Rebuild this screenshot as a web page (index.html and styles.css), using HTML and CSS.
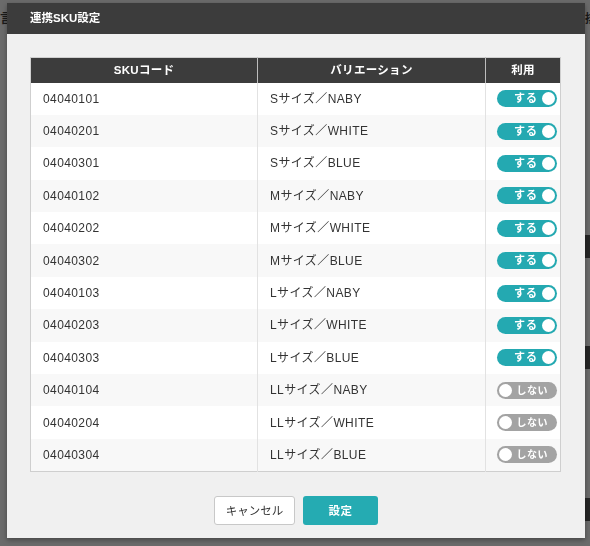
FILE: index.html
```html
<!DOCTYPE html>
<html lang="ja">
<head>
    <meta charset="UTF-8">
    <meta name="viewport" content="width=device-width, initial-scale=1.0">
    <title>連携SKU設定</title>
    <link rel="stylesheet" href="styles.css">
</head>
<body>
    <div class="page">
        <div class="page-mark mark-left">言</div>
        <div class="page-mark mark-right">排</div>
        <div class="page-bar bar-1"></div>
        <div class="page-bar bar-2"></div>
        <div class="page-bar bar-3"></div>
    </div>

    <div class="overlay">
        <div class="modal">
            <div class="modal-header">連携SKU設定</div>
            <div class="modal-body">
                <table class="sku-table">
                    <thead>
                        <tr>
                            <th class="col-code">SKUコード</th>
                            <th class="col-var">バリエーション</th>
                            <th class="col-use">利用</th>
                        </tr>
                    </thead>
                    <tbody id="skuList">
                        <!-- rows rendered below -->
                    </tbody>
                </table>
            </div>
            <div class="modal-footer">
                <button class="btn btn-cancel">キャンセル</button>
                <button class="btn btn-submit">設定</button>
            </div>
        </div>
    </div>

    <script>
        const skus = [
            { code: '04040101', name: 'Sサイズ／NABY', use: true },
            { code: '04040201', name: 'Sサイズ／WHITE', use: true },
            { code: '04040301', name: 'Sサイズ／BLUE', use: true },
            { code: '04040102', name: 'Mサイズ／NABY', use: true },
            { code: '04040202', name: 'Mサイズ／WHITE', use: true },
            { code: '04040302', name: 'Mサイズ／BLUE', use: true },
            { code: '04040103', name: 'Lサイズ／NABY', use: true },
            { code: '04040203', name: 'Lサイズ／WHITE', use: true },
            { code: '04040303', name: 'Lサイズ／BLUE', use: true },
            { code: '04040104', name: 'LLサイズ／NABY', use: false },
            { code: '04040204', name: 'LLサイズ／WHITE', use: false },
            { code: '04040304', name: 'LLサイズ／BLUE', use: false }
        ];

        function renderTable() {
            const list = document.getElementById('skuList');
            list.innerHTML = '';

            skus.forEach((sku, index) => {
                const row = document.createElement('tr');
                row.innerHTML = `
                    <td>${sku.code}</td>
                    <td>${sku.name}</td>
                    <td class="use-cell">
                        <span class="toggle ${sku.use ? 'on' : 'off'}" data-index="${index}">
                            <span class="toggle-label">${sku.use ? 'する' : 'しない'}</span>
                            <span class="toggle-knob"></span>
                        </span>
                    </td>
                `;
                list.appendChild(row);
            });
        }

        document.getElementById('skuList').addEventListener('click', (e) => {
            const toggle = e.target.closest('.toggle');
            if (!toggle) return;
            const i = Number(toggle.dataset.index);
            skus[i].use = !skus[i].use;
            renderTable();
        });

        renderTable();
    </script>
</body>
</html>
```

FILE: styles.css
```css
* {
    margin: 0;
    padding: 0;
    box-sizing: border-box;
}

body {
    font-family: "Liberation Sans", "Noto Sans CJK JP", sans-serif;
    font-size: 12px;
    color: #333;
    background-color: #6b6b6b;
    width: 590px;
    height: 546px;
    overflow: hidden;
}

/* page behind the overlay */
.page {
    position: relative;
    width: 100%;
    height: 100%;
}

.page-mark {
    position: absolute;
    top: 9px;
    font-size: 12px;
    font-weight: bold;
    color: #1a1a1a;
}

.mark-left {
    left: 0;
}

.mark-right {
    right: 0;
    width: 5px;
    overflow: hidden;
}

.page-bar {
    position: absolute;
    right: 0;
    width: 10px;
    height: 23px;
    background-color: #262626;
}

.bar-1 {
    top: 235px;
}

.bar-2 {
    top: 346px;
}

.bar-3 {
    top: 498px;
}

/* modal */
.overlay {
    position: fixed;
    top: 0;
    left: 0;
    width: 590px;
    height: 546px;
    padding: 3px 0 0 7px;
}

.modal {
    width: 578px;
    height: 535px;
    background-color: #f0f0f0;
    box-shadow: 0 2px 5px rgba(0, 0, 0, 0.35);
    display: flex;
    flex-direction: column;
}

.modal-header {
    height: 31px;
    background-color: #3c3c3c;
    color: #fff;
    font-weight: bold;
    font-size: 11.5px;
    line-height: 31px;
    padding-left: 23px;
}

.modal-body {
    padding: 23px 24px 0 23px;
}

.sku-table {
    width: 100%;
    border-collapse: collapse;
    border: 1px solid #cfcfcf;
    table-layout: fixed;
}

.sku-table th {
    height: 25px;
    line-height: 16px;
    background-color: #3c3c3c;
    color: #fff;
    font-weight: bold;
    font-size: 11.5px;
    letter-spacing: 0.3px;
    text-align: center;
    border-left: 1px solid #bdbdbd;
}

.sku-table th:first-child {
    border-left: none;
}

.col-code {
    width: 227px;
}

.col-var {
    width: 228px;
}

.sku-table td {
    height: 32.4px;
    line-height: 14px;
    padding-left: 12px;
    font-size: 12px;
    letter-spacing: 0.4px;
    color: #333;
    vertical-align: middle;
    border-left: 1px solid #e2e2e2;
}

.sku-table td:first-child {
    border-left: none;
}

.sku-table tbody tr:nth-child(odd) {
    background-color: #fff;
}

.sku-table tbody tr:nth-child(even) {
    background-color: #f8f8f8;
}

.sku-table td.use-cell {
    padding-left: 11px;
}

/* toggle switch */
.toggle {
    display: flex;
    align-items: center;
    width: 60px;
    height: 17px;
    border-radius: 9px;
    padding: 0 2px;
    cursor: pointer;
    color: #fff;
    font-weight: bold;
    font-size: 11px;
    line-height: 17px;
}

.toggle.on {
    background-color: #24a9b1;
    justify-content: space-between;
    padding-left: 17px;
    letter-spacing: 1px;
}

.toggle.off {
    background-color: #a3a3a3;
    flex-direction: row-reverse;
    justify-content: space-between;
    padding-right: 9px;
    font-size: 10px;
    letter-spacing: 0.5px;
}

.toggle-knob {
    width: 13px;
    height: 13px;
    border-radius: 50%;
    background-color: #fff;
}

/* footer buttons */
.modal-footer {
    display: flex;
    justify-content: center;
    gap: 8px;
    padding-top: 24px;
}

.btn {
    height: 29px;
    border-radius: 3px;
    font-family: "Liberation Sans", "Noto Sans CJK JP", sans-serif;
    font-size: 11.5px;
    cursor: pointer;
}

.btn-cancel {
    width: 81px;
    background-color: #fff;
    border: 1px solid #c8c8c8;
    color: #333;
}

.btn-submit {
    width: 75px;
    background-color: #25abb2;
    border: none;
    color: #fff;
    font-weight: bold;
    letter-spacing: 0.5px;
}
```
